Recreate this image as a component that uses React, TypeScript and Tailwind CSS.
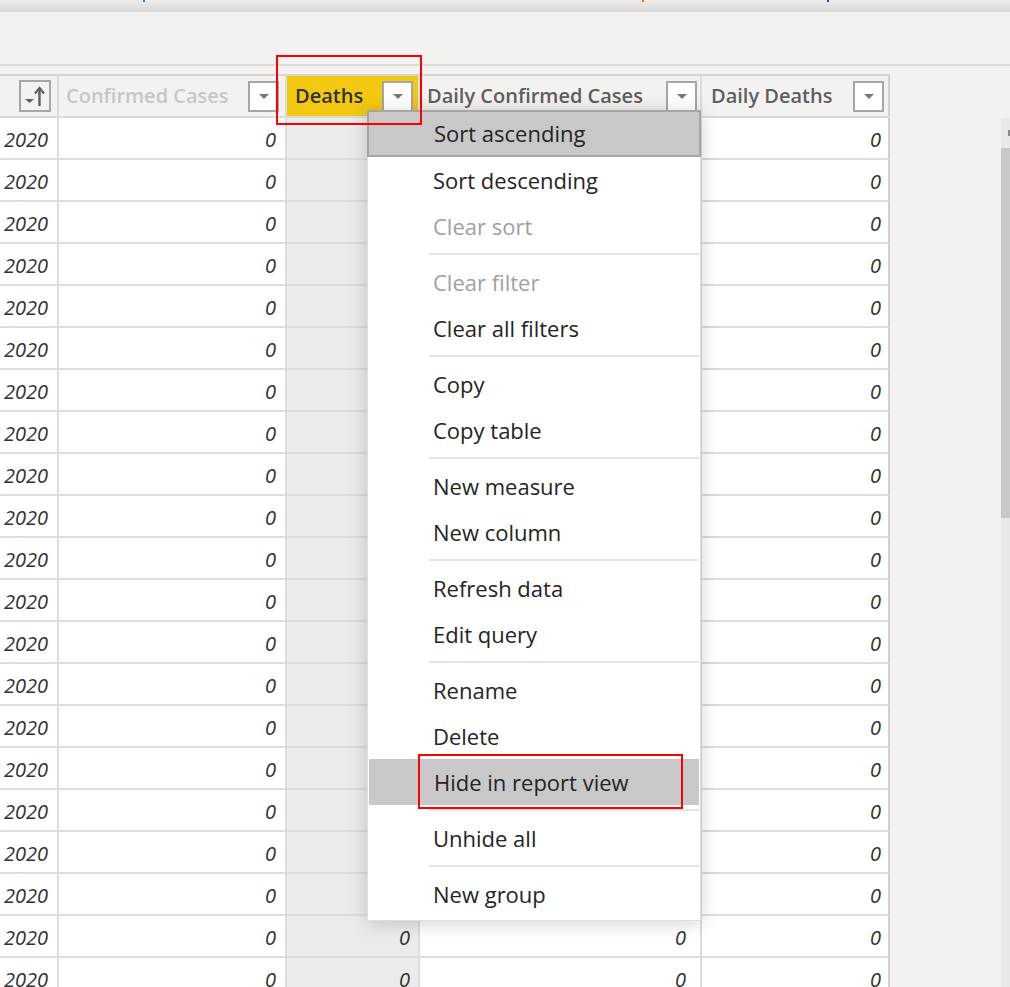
import React from 'react';

const font = "font-['Segoe_UI','Open_Sans',sans-serif]";

const Caret = () => (
  <svg width="12" height="7" viewBox="0 0 12 7" aria-hidden="true">
    <path d="M1 1h10L6 6z" fill="#797775" />
  </svg>
);

const DropBox = () => (
  <div className="w-[31px] h-[31px] shrink-0 bg-white border-2 border-[#a8a6a4] flex items-center justify-center">
    <Caret />
  </div>
);

const SortBox = () => (
  <div className="w-[32px] h-[32px] border-2 border-[#a8a6a4] flex items-center justify-center">
    <svg width="26" height="24" viewBox="0 0 26 24" aria-hidden="true">
      <path d="M3 15h9l-4.5 4z" fill="#605e5c" />
      <path d="M17.5 22V5" stroke="#605e5c" strokeWidth="2.4" fill="none" />
      <path d="M13 9.5l4.5-5.5 4.5 5.5" stroke="#605e5c" strokeWidth="2.2" fill="none" />
    </svg>
  </div>
);

const cols = [
  { w: 'w-[59px]', pr: 'pr-[9px]', val: '2020' },
  { w: 'w-[228px]', pr: 'pr-[9px]', val: '0' },
  { w: 'w-[133px]', pr: 'pr-[8px]', val: '0', gray: true },
  { w: 'w-[282px]', pr: 'pr-[14px]', val: '0' },
  { w: 'w-[188px]', pr: 'pr-[7px]', val: '0' },
];

type Item = { label: string; disabled?: boolean; focus?: boolean; hover?: boolean } | 'sep';

const items: Item[] = [
  { label: 'Sort ascending', focus: true },
  { label: 'Sort descending' },
  { label: 'Clear sort', disabled: true },
  'sep',
  { label: 'Clear filter', disabled: true },
  { label: 'Clear all filters' },
  'sep',
  { label: 'Copy' },
  { label: 'Copy table' },
  'sep',
  { label: 'New measure' },
  { label: 'New column' },
  'sep',
  { label: 'Refresh data' },
  { label: 'Edit query' },
  'sep',
  { label: 'Rename' },
  { label: 'Delete' },
  { label: 'Hide in report view', hover: true },
  'sep',
  { label: 'Unhide all' },
  'sep',
  { label: 'New group' },
];

const ContextMenu = () => (
  <div className="absolute left-[367px] top-[110px] w-[334px] bg-white border border-[#e1dfdd] pb-[3px] shadow-[0_2px_18px_rgba(0,0,0,0.18)]">
    {items.map((it, i) =>
      it === 'sep' ? (
        <div key={i} className="h-[10px] flex items-center">
          <div className="ml-[61px] mr-[1px] w-full h-[2px] bg-[#e6e4e2]" />
        </div>
      ) : (
        <div
          key={i}
          className={`h-[46px] flex items-center pl-[65px] text-[22px] ${
            it.focus ? 'bg-[#c8c8c8] border-2 border-[#a6a6a6] -mx-[1px] -mt-[1px] h-[47px] pl-[64px]' : ''
          } ${it.hover ? 'bg-[#c8c8c8] mx-[1px] pl-[64px]' : ''} ${
            it.disabled ? 'text-[#a19f9d]' : 'text-[#252423]'
          }`}
        >
          {it.label}
        </div>
      )
    )}
  </div>
);

export default function App() {
  const rows = Array.from({ length: 21 });
  return (
    <div className={`relative w-[1010px] h-[987px] overflow-hidden bg-[#f3f2f1] ${font}`}>
      {/* title strip */}
      <div className="relative h-[12px] border-b-2 border-[#d9d8d7] bg-gradient-to-b from-[#eeedec] via-[#e4e3e2] to-[#dddcdb]">
        <span className="absolute left-[143px] top-0 w-[2px] h-[2px] bg-[#2b88d8]" />
        <span className="absolute left-[642px] top-0 w-[2px] h-[2px] bg-[#d47a2c]" />
        <span className="absolute left-[827px] top-0 w-[2px] h-[2px] bg-[#1f4e8c]" />
      </div>
      {/* toolbar area */}
      <div className="h-[54px] border-b-2 border-[#dddcdb]" />
      <div className="h-[8px]" />

      <div className="flex">
        {/* table */}
        <div className="w-[890px] shrink-0">
          <div className="flex border-t-2 border-[#d6d5d4] h-[44px] border-b-2 border-b-[#dcdcdc]">
            <div className={`${cols[0].w} border-r-2 border-[#dcdcdc] flex items-center justify-end pr-[6px]`}>
              <SortBox />
            </div>
            <div className={`${cols[1].w} border-r-2 border-[#dcdcdc] flex items-center justify-between pl-[7px] pr-[6px]`}>
              <span className="text-[20px] font-semibold text-[#c8c6c4]">Confirmed Cases</span>
              <DropBox />
            </div>
            <div className={`${cols[2].w} border-r-2 border-[#e6e4e2] flex items-center justify-between pl-[8px] pr-[5px] bg-[#f2c811]`}>
              <span className="text-[20px] font-semibold text-[#323130]">Deaths</span>
              <DropBox />
            </div>
            <div className={`${cols[3].w} border-r-2 border-[#dcdcdc] flex items-center justify-between pl-[7px] pr-[3px]`}>
              <span className="text-[20px] font-semibold text-[#605e5c]">Daily Confirmed Cases</span>
              <DropBox />
            </div>
            <div className={`${cols[4].w} border-r-2 border-[#d0d0d0] flex items-center justify-between pl-[9px] pr-[4px]`}>
              <span className="text-[20px] font-semibold text-[#605e5c]">Daily Deaths</span>
              <DropBox />
            </div>
          </div>
          {rows.map((_, r) => (
            <div key={r} className="flex h-[42px]">
              {cols.map((c, ci) => (
                <div
                  key={ci}
                  className={`${c.w} ${c.pr} pt-[3px] border-r-2 border-b-2 border-[#dcdcdc] ${ci === 4 ? 'border-r-[#d0d0d0]' : ''} ${
                    c.gray ? 'bg-[#ebebeb]' : 'bg-white'
                  } flex items-center justify-end text-[20px] italic text-[#323130]`}
                >
                  {c.val}
                </div>
              ))}
            </div>
          ))}
        </div>

        <div className="flex-1" />

        {/* vertical scrollbar */}
        <div className="w-[9px] pt-[44px] shrink-0">
          <div className="bg-[#e9e8e7] h-[900px]">
            <div className="h-[30px] flex items-center justify-end">
              <div className="w-[2px] h-[6px] bg-[#8a8886]" />
            </div>
            <div className="h-[370px] bg-[#c8c8c8]" />
          </div>
        </div>
      </div>

      <ContextMenu />

      {/* annotation boxes */}
      <div className="absolute left-[276px] top-[55px] w-[146px] h-[70px] border-2 border-[#ff0000]" />
      <div className="absolute left-[418px] top-[754px] w-[265px] h-[55px] border-2 border-[#ff0000]" />
    </div>
  );
}
